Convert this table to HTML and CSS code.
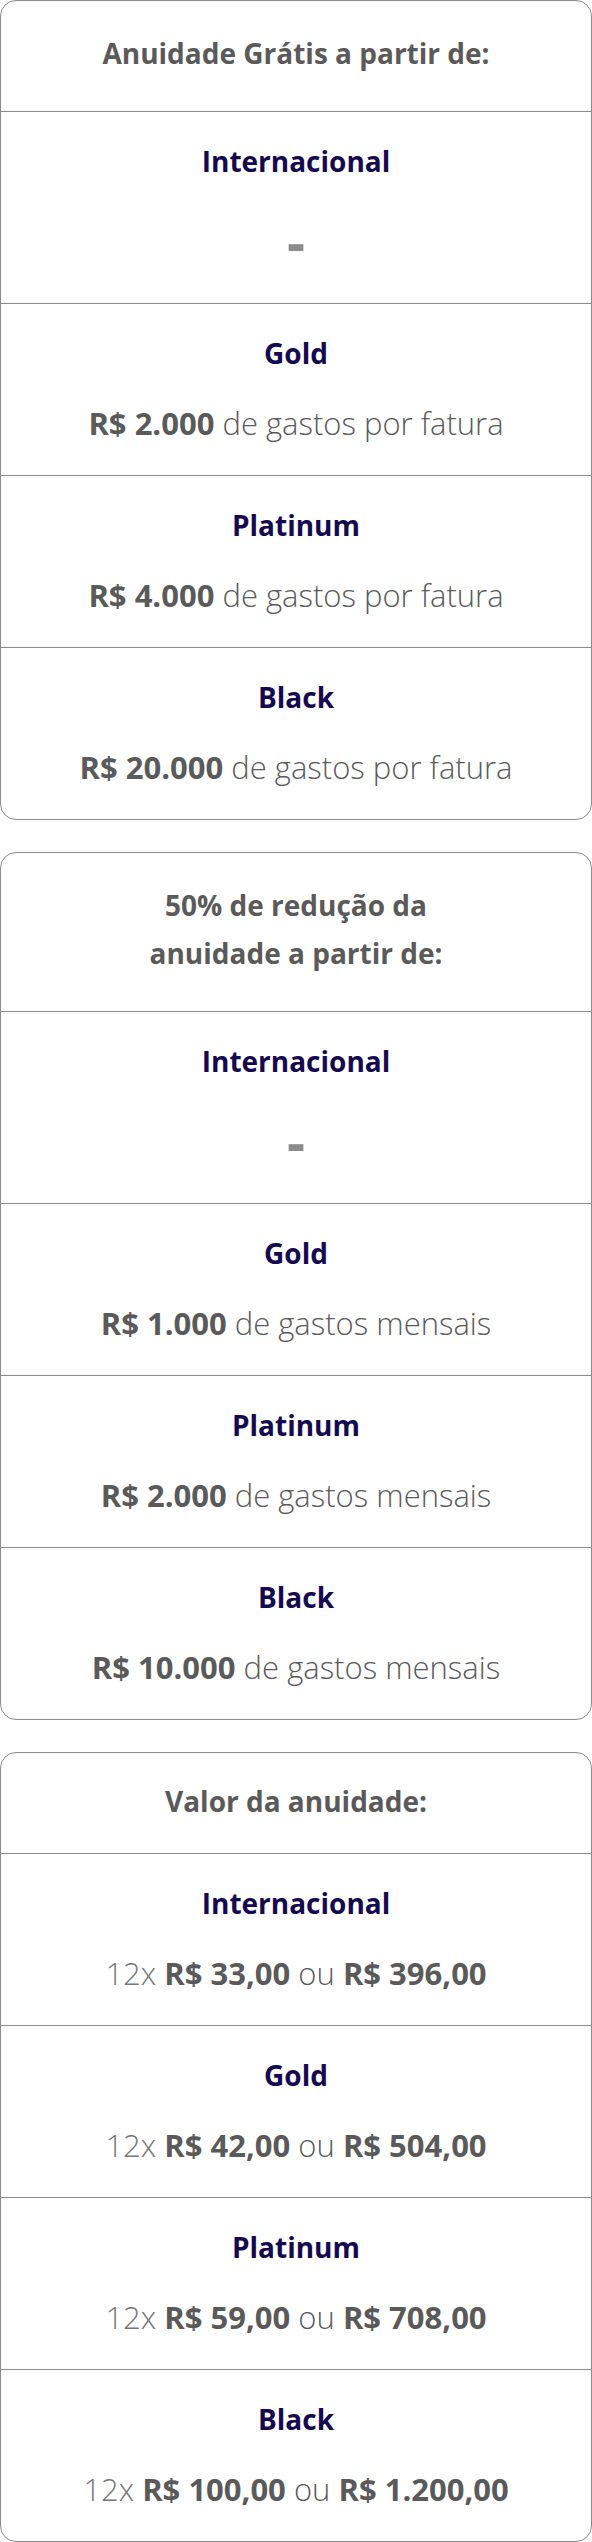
FILE: index.html
```html
<!DOCTYPE html>
<html lang="pt-BR">
<head>
<meta charset="utf-8">
<title>Anuidade</title>
<link rel="stylesheet" href="styles.css">
</head>
<body>
<main class="page">
  <section class="card">
    <h2 class="card-head">Anuidade Grátis a partir de:</h2>
    <div class="tier">
      <h3 class="tier-name">Internacional</h3>
      <p class="tier-value tier-value--empty">-</p>
    </div>
    <div class="tier">
      <h3 class="tier-name">Gold</h3>
      <p class="tier-value"><strong>R$ 2.000</strong> de gastos por fatura</p>
    </div>
    <div class="tier">
      <h3 class="tier-name">Platinum</h3>
      <p class="tier-value"><strong>R$ 4.000</strong> de gastos por fatura</p>
    </div>
    <div class="tier">
      <h3 class="tier-name">Black</h3>
      <p class="tier-value"><strong>R$ 20.000</strong> de gastos por fatura</p>
    </div>
  </section>

  <section class="card">
    <h2 class="card-head">50% de redução da<br>anuidade a partir de:</h2>
    <div class="tier">
      <h3 class="tier-name">Internacional</h3>
      <p class="tier-value tier-value--empty">-</p>
    </div>
    <div class="tier">
      <h3 class="tier-name">Gold</h3>
      <p class="tier-value"><strong>R$ 1.000</strong> de gastos mensais</p>
    </div>
    <div class="tier">
      <h3 class="tier-name">Platinum</h3>
      <p class="tier-value"><strong>R$ 2.000</strong> de gastos mensais</p>
    </div>
    <div class="tier">
      <h3 class="tier-name">Black</h3>
      <p class="tier-value"><strong>R$ 10.000</strong> de gastos mensais</p>
    </div>
  </section>

  <section class="card">
    <h2 class="card-head card-head--compact">Valor da anuidade:</h2>
    <div class="tier">
      <h3 class="tier-name">Internacional</h3>
      <p class="tier-value"><span class="times">12x</span> <strong>R$ 33,00</strong> ou <strong>R$ 396,00</strong></p>
    </div>
    <div class="tier">
      <h3 class="tier-name">Gold</h3>
      <p class="tier-value"><span class="times">12x</span> <strong>R$ 42,00</strong> ou <strong>R$ 504,00</strong></p>
    </div>
    <div class="tier">
      <h3 class="tier-name">Platinum</h3>
      <p class="tier-value"><span class="times">12x</span> <strong>R$ 59,00</strong> ou <strong>R$ 708,00</strong></p>
    </div>
    <div class="tier">
      <h3 class="tier-name">Black</h3>
      <p class="tier-value"><span class="times">12x</span> <strong>R$ 100,00</strong> ou <strong>R$ 1.200,00</strong></p>
    </div>
  </section>
</main>
</body>
</html>
```

FILE: styles.css
```css
html, body {
  margin: 0;
  padding: 0;
  background: #ffffff;
}

body {
  font-family: "Open Sans", "Noto Sans", sans-serif;
  color: #5a5a5a;
}

.page {
  display: flex;
  flex-direction: column;
  gap: 32px;
  width: 592px;
}

.card {
  border: 1px solid #8c8c8c;
  border-radius: 16px;
  overflow: hidden;
}

.card-head {
  margin: 0;
  padding: 28px 16px 34px;
  font-size: 28px;
  line-height: 48px;
  font-weight: 700;
  color: #5a5a5a;
  text-align: center;
  border-bottom: 1px solid #8c8c8c;
}

.card-head--compact {
  padding: 24px 16px 28px;
}

.tier {
  display: flex;
  flex-direction: column;
  gap: 32px;
  padding: 31px 16px 32px;
  text-align: center;
  border-bottom: 1px solid #8c8c8c;
}

.tier:last-child {
  border-bottom: none;
}

.tier-name {
  margin: 0;
  font-size: 28px;
  line-height: 36px;
  font-weight: 700;
  color: #150a50;
}

.tier-value {
  margin: 0;
  font-size: 31px;
  line-height: 40px;
  font-weight: 300;
  color: #5a5a5a;
}

.tier-value strong {
  font-weight: 700;
}

.tier-value--empty {
  font-size: 56px;
  line-height: 60px;
  font-weight: 700;
  color: #8c8c8c;
}

.times {
  color: #777777;
}
```
